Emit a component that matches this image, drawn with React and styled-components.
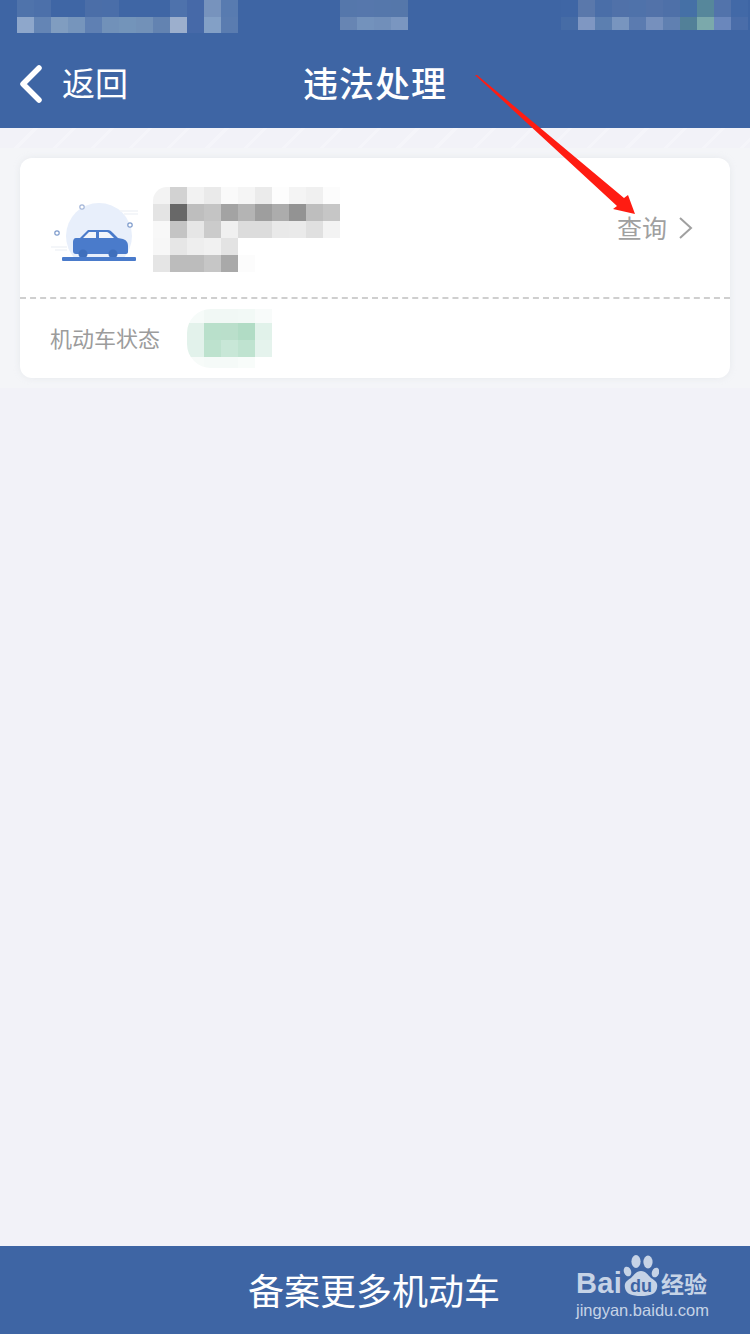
import React from "react";
import styled, { createGlobalStyle } from "styled-components";

const CJK = `"Noto Sans CJK SC", "Noto Sans", sans-serif`;

const Global = createGlobalStyle`
  html, body { margin: 0; padding: 0; background: #f2f2f8; }
  * { box-sizing: border-box; }
`;

const Page = styled.div`
  position: relative;
  width: 750px;
  height: 1334px;
  display: flex;
  flex-direction: column;
  overflow: hidden;
  background: #f2f2f8;
  font-family: ${CJK};
`;

const Header = styled.header`
  height: 128px;
  flex: none;
  background: #3e65a4;
  display: flex;
  flex-direction: column;
`;

const StatusBar = styled.div`
  height: 34px;
  padding-left: 17px;
  display: flex;
  align-items: flex-start;
`;

const Gap = styled.div`
  flex: none;
  width: ${(p) => p.$w}px;
`;

const NavBar = styled.nav`
  position: relative;
  flex: 1;
  display: flex;
  align-items: center;
  justify-content: center;
  padding-top: 2px;
`;

const BackLink = styled.div`
  position: absolute;
  left: 18px;
  top: 26px;
  display: flex;
  align-items: center;
  gap: 18px;
  color: #fff;
  font-size: 33px;
  line-height: 44px;
  svg {
    margin-top: 4px;
  }
`;

const Title = styled.h1`
  margin: 0;
  color: #fff;
  font-size: 35px;
  line-height: 46px;
  font-weight: 500;
  letter-spacing: 1px;
`;

const MosaicGrid = styled.div`
  display: grid;
  flex: none;
  grid-template-columns: repeat(${(p) => p.$cols}, ${(p) => p.$cell}px);
  grid-template-rows: ${(p) => p.$rows};
  border-top-left-radius: ${(p) => p.$radius || 0}px;
  border-bottom-left-radius: ${(p) => p.$bottomRadius || 0}px;
  overflow: hidden;
`;

const Cell = styled.div`
  background: ${(p) => p.$c};
`;

const Mosaic = ({ data, cell = 17, rows, radius, bottomRadius }) => (
  <MosaicGrid $cols={data[0].length} $cell={cell} $rows={rows} $radius={radius} $bottomRadius={bottomRadius}>
    {data.flat().map((c, i) => (
      <Cell key={i} $c={c} />
    ))}
  </MosaicGrid>
);

const Zone = styled.main`
  flex: 1;
  display: flex;
  flex-direction: column;
`;

const Stripes = styled.div`
  height: 20px;
  flex: none;
  background: repeating-linear-gradient(
    135deg,
    #f2f2f8 0 24px,
    #f5f5fa 24px 27px
  );
`;

const CardHalo = styled.div`
  flex: none;
  height: 240px;
  padding: 10px 20px;
  background: #f4f5f8;
`;

const Card = styled.section`
  height: 220px;
  background: #fff;
  border-radius: 12px;
  box-shadow: 0 0 6px rgba(225, 228, 232, 0.7);
  display: flex;
  flex-direction: column;
`;

const VehicleRow = styled.div`
  height: 141px;
  flex: none;
  padding: 0 37px 0 30px;
  display: flex;
  align-items: center;
  border-bottom: 2px dashed #cfcfcf;
`;

const CarArt = styled.svg`
  width: 103px;
  height: 70px;
  flex: none;
  display: block;
`;

const PlateBlock = styled.div`
  flex: none;
  padding-top: 3px;
`;

const QueryLink = styled.div`
  margin-left: auto;
  display: flex;
  align-items: center;
  gap: 11px;
  color: #a0a0a0;
  font-size: 25px;
  line-height: 34px;
  span {
    margin-bottom: 2px;
  }
`;

const StatusRow = styled.div`
  flex: 1;
  padding: 10px 0 0 30px;
  display: flex;
  align-items: flex-start;
  gap: 27px;
`;

const StatusLabel = styled.span`
  width: 110px;
  flex: none;
  padding-top: 12px;
  color: #9c9c9c;
  font-size: 22px;
  line-height: 32px;
`;

const BottomBar = styled.footer`
  position: relative;
  height: 88px;
  flex: none;
  background: #3e65a4;
  display: flex;
  align-items: center;
  justify-content: center;
  color: #fff;
  font-size: 36px;
  padding: 0 2px 2px 0;
`;

const Watermark = styled.div`
  position: absolute;
  left: 576px;
  top: 8px;
  width: 136px;
  color: #c6d3e6;
  display: flex;
  flex-direction: column;
`;

const LogoRow = styled.div`
  display: flex;
  align-items: flex-end;
  height: 44px;
`;

const LogoWord = styled.span`
  font-family: "Liberation Sans", sans-serif;
  font-weight: 700;
  font-size: 29px;
  line-height: 30px;
  width: 47px;
  letter-spacing: 0.3px;
`;

const LogoCn = styled.span`
  font-size: 23px;
  line-height: 30px;
  font-weight: 700;
  margin-left: 2px;
  white-space: nowrap;
`;

const LogoUrl = styled.span`
  font-family: "Liberation Sans", sans-serif;
  font-size: 16.5px;
  line-height: 20px;
  margin-top: 2px;
  white-space: nowrap;
`;

const ArrowLayer = styled.svg`
  position: absolute;
  left: 0;
  top: 0;
  width: 750px;
  height: 300px;
  pointer-events: none;
`;

const leftStatus = [
  ["#4f73ab", "#4c70aa", "#3f66a5", "#3f66a5", "#4b6ea8", "#4a6ea9", "#3f66a5", "#3f66a5", "#3f66a5", "#4e72ac", "#4669a8", "#7793bd", "#587bb0"],
  ["#8ea7cb", "#6485b5", "#809dc0", "#7695bc", "#5f80b3", "#7191b9", "#7394ba", "#7291b8", "#6383b1", "#9cafcd", "#4669a8", "#83a0c6", "#5a7cb0"],
];

const midStatus = [
  ["#5577ab", "#5677ac", "#5577ab", "#5577aa"],
  ["#6785b3", "#7392bc", "#718fba", "#7a96c0"],
];

const rightStatus = [
  ["#3f66a5", "#5a78ab", "#4a6ea8", "#5071a9", "#4f72aa", "#5272a9", "#4e70a8", "#4570a6", "#56879b", "#5273ab", "#4269a7"],
  ["#466ca6", "#7f97c2", "#5c7fb0", "#7895bf", "#5b7bb0", "#7690bd", "#6080b1", "#528098", "#7ba9ab", "#6a87bc", "#4a6da9"],
];

const plate = [
  ["#f3f3f3", "#d2d2d2", "#f2f2f2", "#eaeaea", "#fafafa", "#f5f5f5", "#ebebeb", "#fdfdfd", "#f4f4f4", "#f0f0f0", "#fcfcfc"],
  ["#e4e4e4", "#686868", "#bebebe", "#c4c4c4", "#a3a3a3", "#b4b4b4", "#9e9e9e", "#acacac", "#939393", "#bebebe", "#c6c6c6"],
  ["#f8f8f8", "#c4c4c4", "#e6e6e6", "#cbcbcb", "#f0f0f0", "#dcdcdc", "#dcdcdc", "#e9e9e9", "#eaeaea", "#e0e0e0", "#f3f3f3"],
  ["#f7f7f7", "#e6e6e6", "#eeeeee", "#f1f1f1", "#e3e3e3", "#ffffff", "#fff", "#fff", "#fff", "#fff", "#fff"],
  ["#e5e5e5", "#bcbcbc", "#bcbcbc", "#c6c6c6", "#a9a9a9", "#fcfcfc", "#fff", "#fff", "#fff", "#fff", "#fff"],
];

const statusBlock = [
  ["#f6fbf9", "#f1f8f5", "#f1f8f5", "#f2f9f6", "#f8fbfa"],
  ["#e3f2eb", "#b9e0cb", "#badfcb", "#b1dcc5", "#e1f2ea"],
  ["#e2f2eb", "#bde2ce", "#c8e7d7", "#bfe3d0", "#e5f3ed"],
  ["#f7fbf9", "#f5faf8", "#f5faf8", "#f8fcfa", "#ffffff"],
];

const Car = () => (
  <CarArt viewBox="0 0 103 70">
    <path d="M25.3 66 A33 33 0 1 1 72.7 66 Z" fill="#e8effb" />
    <circle cx="32" cy="14" r="2.2" fill="#fff" stroke="#a4b6d8" strokeWidth="1.2" />
    <circle cx="80" cy="32" r="2.2" fill="#fff" stroke="#7f9ccc" strokeWidth="1.2" />
    <circle cx="7" cy="40" r="2.2" fill="#fff" stroke="#7f9ccc" strokeWidth="1.2" />
    <path d="M70 18h18M74 21h14M1 54h16M5 57h12" stroke="#f1f3f7" strokeWidth="1.5" />
    <g transform="translate(0 7)">
      <path d="M23 42c0-2 1-4 3-4h4l8-8h20c2 0 3 1 5 3l5 5 5 1c3 1 5 3 5 7v6c0 1-1 2-2 2H26c-2 0-3-1-3-3z" fill="#4a7bcb" />
      <path d="M33 38l6-6h7v6zM49 32h8c1 0 2 1 3 2l4 4H49z" fill="#f2f5fb" />
      <circle cx="33" cy="54" r="4.5" fill="#3f6fbc" />
      <circle cx="63" cy="54" r="4.5" fill="#3f6fbc" />
    </g>
    <rect x="12" y="64" width="74" height="4" rx="1" fill="#4a7bcb" />
  </CarArt>
);

const Paw = () => (
  <svg width="36" height="44" viewBox="0 0 36 44" style={{ flex: "none" }}>
    <ellipse cx="13" cy="7.5" rx="4.6" ry="6.5" fill="#c6d3e6" />
    <ellipse cx="25" cy="8" rx="4.6" ry="6.5" fill="#c6d3e6" />
    <ellipse cx="4.5" cy="17.5" rx="3.6" ry="5" fill="#c6d3e6" transform="rotate(-20 4.5 17.5)" />
    <ellipse cx="32.5" cy="18.5" rx="3.6" ry="5" fill="#c6d3e6" transform="rotate(20 32.5 18.5)" />
    <path d="M18 17c5 0 7 4 10 7 5 3 7 5 6 10-1 6-7 8-16 8S3 40 2 34c-1-5 1-7 6-10 3-3 5-7 10-7z" fill="#c6d3e6" />
    <text x="18" y="38" textAnchor="middle" fontFamily="Liberation Sans, sans-serif" fontWeight="700" fontSize="18" fill="#3e65a4">du</text>
  </svg>
);

export default function App() {
  return (
    <>
      <Global />
      <Page>
        <Header>
          <StatusBar>
            <Mosaic data={leftStatus} rows="17px 16px" />
            <Gap $w={102} />
            <Mosaic data={midStatus} rows="17px 13px" />
            <Gap $w={153} />
            <Mosaic data={rightStatus} rows="17px 13px" />
          </StatusBar>
          <NavBar>
            <BackLink>
              <svg width="26" height="40" viewBox="0 0 26 40">
                <path d="M21 4 L5 20 L21 36" fill="none" stroke="#fff" strokeWidth="5.5" strokeLinecap="round" strokeLinejoin="round" />
              </svg>
              <span>返回</span>
            </BackLink>
            <Title>违法处理</Title>
          </NavBar>
        </Header>
        <Zone>
          <Stripes />
          <CardHalo>
            <Card>
              <VehicleRow>
                <Car />
                <PlateBlock>
                  <Mosaic data={plate} rows="repeat(5, 17px)" radius={14} />
                </PlateBlock>
                <QueryLink>
                  <span>查询</span>
                  <svg width="15" height="24" viewBox="0 0 15 24">
                    <path d="M2 2 L13 12 L2 22" fill="none" stroke="#a0a0a0" strokeWidth="2" />
                  </svg>
                </QueryLink>
              </VehicleRow>
              <StatusRow>
                <StatusLabel>机动车状态</StatusLabel>
                <Mosaic data={statusBlock} rows="14px 17px 17px 11px" radius={24} bottomRadius={24} />
              </StatusRow>
            </Card>
          </CardHalo>
        </Zone>
        <BottomBar>
          备案更多机动车
          <Watermark>
            <LogoRow>
              <LogoWord>Bai</LogoWord>
              <Paw />
              <LogoCn>经验</LogoCn>
            </LogoRow>
            <LogoUrl>jingyan.baidu.com</LogoUrl>
          </Watermark>
        </BottomBar>
        <ArrowLayer viewBox="0 0 750 300">
          <polygon points="475,75 477,75 624,198 628,195 635,214 613,209 617,206" fill="#ff1c12" />
        </ArrowLayer>
      </Page>
    </>
  );
}
